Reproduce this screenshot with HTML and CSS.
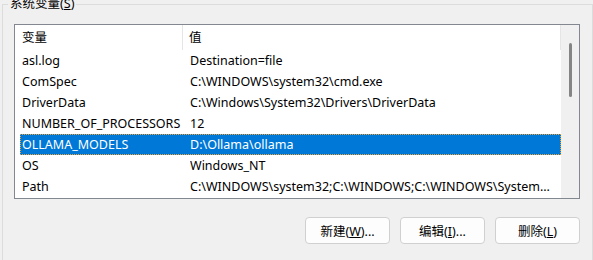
FILE: index.html
```html
<!DOCTYPE html>
<html lang="zh-CN">
<head>
  <meta charset="UTF-8">
  <title>系统变量</title>
  <link rel="stylesheet" href="styles.css">
</head>
<body>
  <fieldset class="group">
    <legend>系统变量(<u>S</u>)</legend>

    <div class="listbox">
      <div class="list">
        <div class="list-head">
          <div class="head-cell">变量</div>
          <div class="head-cell">值</div>
        </div>
        <div class="row"><span>asl.log</span><span>Destination=file</span></div>
        <div class="row"><span>ComSpec</span><span>C:\WINDOWS\system32\cmd.exe</span></div>
        <div class="row"><span>DriverData</span><span>C:\Windows\System32\Drivers\DriverData</span></div>
        <div class="row"><span>NUMBER_OF_PROCESSORS</span><span>12</span></div>
        <div class="row selected"><span>OLLAMA_MODELS</span><span>D:\Ollama\ollama</span></div>
        <div class="row"><span>OS</span><span>Windows_NT</span></div>
        <div class="row"><span>Path</span><span>C:\WINDOWS\system32;C:\WINDOWS;C:\WINDOWS\System...</span></div>
      </div>
      <div class="scrollbar"><div class="thumb"></div></div>
    </div>

    <div class="actions">
      <button class="btn">新建(<u>W</u>)...</button>
      <button class="btn">编辑(<u>I</u>)...</button>
      <button class="btn">删除(<u>L</u>)</button>
    </div>
  </fieldset>
</body>
</html>
```

FILE: styles.css
```css
* { box-sizing: border-box; }
html, body {
  margin: 0;
  height: 100%;
  overflow: hidden;
  background: #f0f0f0;
  font-family: "Noto Sans", "Noto Sans CJK SC", sans-serif;
  font-size: 12.5px;
  color: #000;
}
.group {
  margin: -3px 0 0 2px;
  width: 591px;
  height: 300px;
  padding: 13px 11px 0 11px;
  border: 1px solid #dcdcdc;
  border-radius: 0;
}
.group legend {
  margin-left: -6px;
  padding: 0 2px;
  line-height: 14px;
  height: 14px;
}
.listbox {
  display: flex;
  width: 566px;
  height: 175px;
  border: 1px solid #828790;
  background: #fff;
}
.list {
  flex: 1;
  overflow: hidden;
}
.list-head {
  display: grid;
  grid-template-columns: 168px 1fr;
  height: 25px;
}
.head-cell {
  line-height: 25px;
  padding-left: 6px;
  border-right: 1px solid #e5e5e5;
}
.head-cell:first-child { padding-left: 7px; }
.row {
  display: grid;
  grid-template-columns: 168px 1fr;
  height: 21px;
  line-height: 21px;
  margin-left: 5px;
  padding-left: 2px;
  white-space: nowrap;
}
.row span { overflow: hidden; }
.row.selected {
  background: #0078d7;
  color: #fff;
  outline: 1px dotted #f0a030;
  outline-offset: -1px;
}
.scrollbar {
  width: 18px;
  background: #f0f0f0;
  padding-top: 18px;
}
.thumb {
  width: 3px;
  height: 54px;
  margin: 0 auto;
  background: #858585;
  border-radius: 2px;
}
.actions {
  display: flex;
  justify-content: flex-end;
  gap: 10px;
  margin-top: 18px;
  padding-right: 1px;
}
.btn {
  width: 85px;
  height: 27px;
  padding: 0;
  background: #fdfdfd;
  border: 1px solid #d0d0d0;
  border-radius: 4px;
  font: inherit;
  color: #000;
}
```
